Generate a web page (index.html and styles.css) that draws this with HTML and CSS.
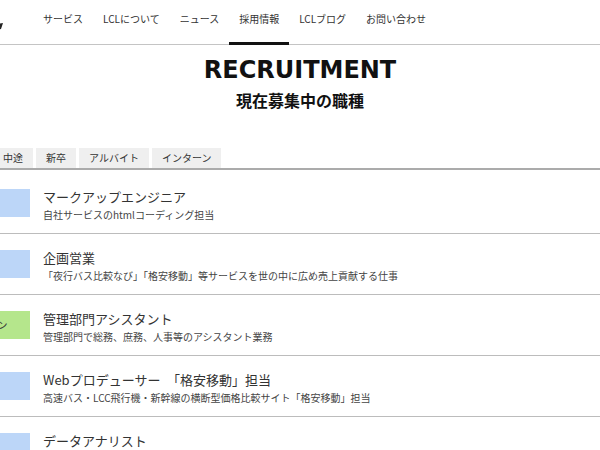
FILE: index.html
```html
<!DOCTYPE html>
<html lang="ja">
<head>
  <meta charset="UTF-8" />
  <meta name="viewport" content="width=device-width, initial-scale=1.0"/>
  <title>採用情報 | LCL</title>
  <link rel="stylesheet" href="styles.css">
</head>
<body>
  <div class="page">

    <!-- ヘッダー -->
    <header>
      <a href="#" class="logo">
        <svg width="53" height="44" viewBox="0 0 53 44">
          <path d="M10 14h5v14h9v4H10z" fill="#222"/>
          <path d="M48 24l5-1-2 6-4 1z" fill="#222"/>
        </svg>
      </a>
      <ul class="gnav">
        <li><a href="#">サービス</a></li>
        <li><a href="#">LCLについて</a></li>
        <li><a href="#">ニュース</a></li>
        <li class="active"><a href="#">採用情報</a></li>
        <li><a href="#">LCLブログ</a></li>
        <li><a href="#">お問い合わせ</a></li>
      </ul>
    </header>

    <!-- タイトル -->
    <h1 class="title">RECRUITMENT</h1>
    <h2 class="subtitle">現在募集中の職種</h2>

    <!-- 絞り込みタブ -->
    <ul class="tabs">
      <li class="tab">全て</li>
      <li class="tab">中途</li>
      <li class="tab">新卒</li>
      <li class="tab">アルバイト</li>
      <li class="tab">インターン</li>
    </ul>

    <!-- 職種一覧 -->
    <ul class="job-list">
      <li class="job">
        <span class="badge">中途</span>
        <div class="job-body">
          <p class="job-title">マークアップエンジニア</p>
          <p class="job-desc">自社サービスのhtmlコーディング担当</p>
        </div>
      </li>
      <li class="job">
        <span class="badge">中途</span>
        <div class="job-body">
          <p class="job-title">企画営業</p>
          <p class="job-desc">「夜行バス比較なび」「格安移動」等サービスを世の中に広め売上貢献する仕事</p>
        </div>
      </li>
      <li class="job">
        <span class="badge intern">インターン</span>
        <div class="job-body">
          <p class="job-title">管理部門アシスタント</p>
          <p class="job-desc">管理部門で総務、庶務、人事等のアシスタント業務</p>
        </div>
      </li>
      <li class="job">
        <span class="badge">中途</span>
        <div class="job-body">
          <p class="job-title">Webプロデューサー　「格安移動」担当</p>
          <p class="job-desc">高速バス・LCC飛行機・新幹線の横断型価格比較サイト「格安移動」担当</p>
        </div>
      </li>
      <li class="job">
        <span class="badge">中途</span>
        <div class="job-body">
          <p class="job-title">データアナリスト</p>
          <p class="job-desc">サービスのデータ分析担当</p>
        </div>
      </li>
    </ul>

  </div>
</body>
</html>
```

FILE: styles.css
```css
body {
  margin: 0;
  padding: 0;
  background: #fff;
  color: #333;
  font-family: "Noto Sans CJK JP", "Noto Sans", sans-serif;
  overflow-x: hidden;
}

ul {
  list-style: none;
  margin: 0;
  padding: 0;
}

p {
  margin: 0;
}

.page {
  width: 700px;
  margin-left: -50px;
}

/* header */
header {
  display: flex;
  align-items: flex-start;
  height: 44px;
  border-bottom: 1px solid #c4c4c4;
}

.logo {
  display: block;
  width: 53px;
  height: 44px;
  margin-right: 30px;
}

.logo svg {
  display: block;
}

.gnav {
  display: flex;
  height: 44px;
}

.gnav a {
  display: block;
  padding: 12px 10px 16px;
  border-bottom: 3px solid transparent;
  font-size: 10px;
  line-height: 14px;
  color: #333;
  text-decoration: none;
}

.gnav .active a {
  border-bottom-color: #111;
}

/* titles */
.title {
  margin: 10px 0 0;
  font-family: "DejaVu Sans", Verdana, sans-serif;
  font-size: 24px;
  line-height: 30px;
  font-weight: bold;
  color: #111;
  text-align: center;
}

.subtitle {
  margin: 5px 0 0;
  font-size: 16px;
  line-height: 20px;
  font-weight: bold;
  color: #111;
  text-align: center;
}

/* tabs */
.tabs {
  display: flex;
  gap: 3px;
  margin-top: 38px;
  border-bottom: 2px solid #ababab;
}

.tab {
  padding: 0 10px;
  background: #efefef;
  font-size: 10px;
  line-height: 20px;
  color: #333;
  cursor: pointer;
}

/* job list */
.job-list {
  margin-top: 3px;
}

.job {
  display: flex;
  align-items: flex-start;
  gap: 13px;
  height: 34px;
  padding: 15px 0 11px;
  border-bottom: 1px solid #bcbcbc;
}

.job:last-child {
  border-bottom: none;
}

.badge {
  flex: none;
  width: 72px;
  height: 28px;
  padding-left: 8px;
  margin-top: 1px;
  background: #bcd6f8;
  font-size: 10px;
  line-height: 28px;
  color: #333;
}

.badge.intern {
  background: #b5e68c;
}

.job-title {
  font-size: 13px;
  line-height: 18px;
  color: #333;
}

.job-desc {
  margin-top: 2px;
  font-size: 10px;
  line-height: 14px;
  color: #444;
}
```
